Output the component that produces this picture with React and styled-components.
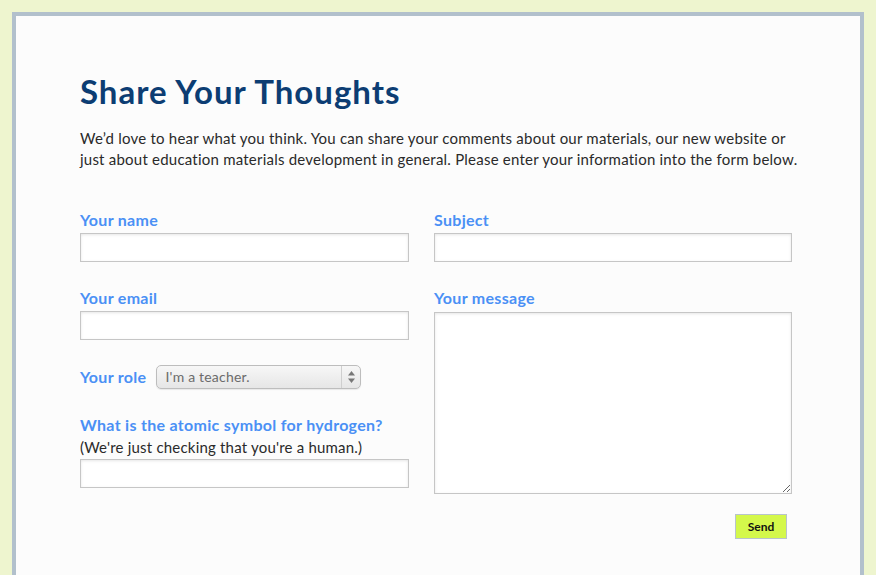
import React from "react";
import styled, { createGlobalStyle } from "styled-components";

const Global = createGlobalStyle`
  html, body { margin: 0; padding: 0; background: #eef5cf; }
  body { font-family: Lato, "Open Sans", sans-serif; }
  * { box-sizing: border-box; }
`;

const Page = styled.div`
  padding: 12px 0 0 12px;
  height: 575px;
  overflow: hidden;
`;

const Panel = styled.div`
  width: 852px;
  min-height: 600px;
  background: #fcfcfc;
  border: 4px solid #b2c0cc;
  border-bottom: none;
  padding: 55px 64px 0 64px;
`;

const Title = styled.h1`
  margin: 0;
  font-size: 33px;
  line-height: 40px;
  font-weight: 700;
  color: #0c3d73;
  letter-spacing: 1px;
`;

const Intro = styled.p`
  margin: 17px 0 0 0;
  width: 724px;
  white-space: nowrap;
  font-size: 15px;
  line-height: 21px;
  color: #2a2a2a;
  letter-spacing: 0.22px;
`;

const Form = styled.form`
  margin-top: 41px;
  display: grid;
  grid-template-columns: 329px 358px;
  column-gap: 25px;
  align-items: start;
`;

const Column = styled.div`
  display: flex;
  flex-direction: column;
`;

const Field = styled.div`
  display: flex;
  flex-direction: column;
  margin-bottom: ${(p) => p.$mb || 0}px;
`;

const Label = styled.label`
  font-size: 16px;
  line-height: 18px;
  font-weight: 700;
  color: #4a90f5;
  letter-spacing: 0.3px;
  white-space: nowrap;
  margin-bottom: ${(p) => p.$mb ?? 4}px;
`;

const Hint = styled.div`
  font-size: 15px;
  line-height: 20px;
  color: #2a2a2a;
  letter-spacing: 0.2px;
  margin-bottom: 2px;
`;

const TextInput = styled.input`
  width: ${(p) => p.$w}px;
  height: 29px;
  border: 1px solid #c6c6c6;
  background: #fff;
  box-shadow: inset 0 1px 3px rgba(0, 0, 0, 0.1);
  margin: 0;
  padding: 0 4px;
  outline: none;
`;

const TextArea = styled.textarea`
  width: 358px;
  height: 182px;
  border: 1px solid #c6c6c6;
  background: #fff;
  box-shadow: inset 0 1px 3px rgba(0, 0, 0, 0.1);
  margin: 0;
  padding: 4px;
  outline: none;
  display: block;
`;

const RoleRow = styled.div`
  display: flex;
  align-items: center;
  gap: 10px;
  margin-bottom: 27px;
`;

const SelectBox = styled.div`
  width: 205px;
  height: 24px;
  display: flex;
  align-items: stretch;
  border: 1px solid #bdbdbd;
  border-radius: 5px;
  background: linear-gradient(#f7f7f7, #e6e6e6);
  box-shadow: 0 1px 1px rgba(0, 0, 0, 0.08);
`;

const SelectValue = styled.span`
  flex: 1;
  font-size: 14px;
  line-height: 22px;
  color: #6b6b6b;
  padding-left: 8px;
  letter-spacing: 0.2px;
`;

const ArrowCell = styled.span`
  width: 19px;
  border-left: 1px solid #cfcfcf;
  display: flex;
  align-items: center;
  justify-content: center;
`;

const Actions = styled.div`
  display: flex;
  justify-content: flex-end;
  padding-right: 5px;
  margin-top: 20px;
`;

const SendButton = styled.button`
  width: 52px;
  height: 25px;
  background: #d4f84b;
  border: 1px solid #b8c4cc;
  font-family: Lato, sans-serif;
  font-size: 12px;
  font-weight: 700;
  color: #111;
  padding: 0;
  cursor: pointer;
`;

export default function App() {
  return (
    <Page>
      <Global />
      <Panel>
        <Title>Share Your Thoughts</Title>
        <Intro>
          We’d love to hear what you think. You can share your comments about our
          materials, our new website or
          <br />
          just about education materials development in general. Please enter your
          information into the form below.
        </Intro>
        <Form onSubmit={(e) => e.preventDefault()}>
          <Column>
            <Field $mb={27}>
              <Label $mb={4}>Your name</Label>
              <TextInput $w={329} />
            </Field>
            <Field $mb={25}>
              <Label $mb={4}>Your email</Label>
              <TextInput $w={329} />
            </Field>
            <RoleRow>
              <Label $mb={0}>Your role</Label>
              <SelectBox>
                <SelectValue>I'm a teacher.</SelectValue>
                <ArrowCell>
                  <svg width="9" height="14" viewBox="0 0 9 14">
                    <path d="M4.5 1 L8 5.5 L1 5.5 Z" fill="#777" />
                    <path d="M4.5 13 L8 8.5 L1 8.5 Z" fill="#777" />
                  </svg>
                </ArrowCell>
              </SelectBox>
            </RoleRow>
            <Field>
              <Label $mb={3}>What is the atomic symbol for hydrogen?</Label>
              <Hint>(We're just checking that you're a human.)</Hint>
              <TextInput $w={329} />
            </Field>
          </Column>
          <Column>
            <Field $mb={27}>
              <Label $mb={4}>Subject</Label>
              <TextInput $w={358} />
            </Field>
            <Field>
              <Label $mb={5}>Your message</Label>
              <TextArea />
            </Field>
            <Actions>
              <SendButton type="submit">Send</SendButton>
            </Actions>
          </Column>
        </Form>
      </Panel>
    </Page>
  );
}
